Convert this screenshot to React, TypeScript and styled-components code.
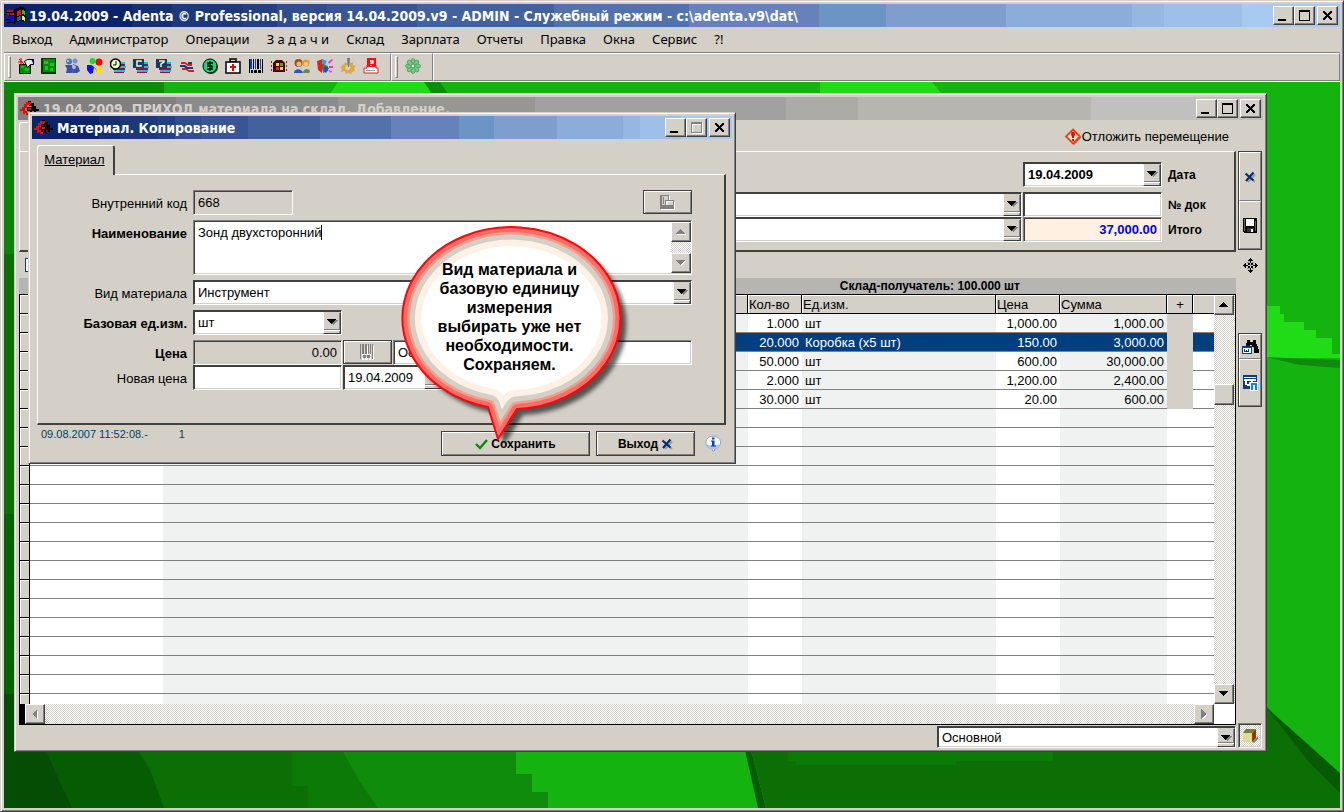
import React from 'react';
import styled, { createGlobalStyle, css } from 'styled-components';

const face = '#d4d0c8';
const dark = '#404040';
const mid = '#808080';
const arial = '"Liberation Sans", Arial, sans-serif';
const tahoma = '"DejaVu Sans Condensed", "DejaVu Sans", Tahoma, sans-serif';
const menuFont = '"Noto Sans", Tahoma, sans-serif';
const dither = 'repeating-conic-gradient(#d4d0c8 0 25%, #ffffff 0 50%) 0 0 / 2px 2px';

const activeCaption = `linear-gradient(90deg, #0a246a 9.6%, #14306f 0 12.6%, #1c397a 0 17.9%, #24417f 0 20.4%,
  #2f4e8b 0 24.2%, #385694 0 30.9%, #41629d 0 41.2%, #5272ab 0 51.3%, #6583ba 0 61%, #6c94c5 0 66%,
  #7e9fcd 0 75%, #8badda 0 84.4%, #95b8e0 0 86.8%, #9cc0e8 0 92.7%, #a6caf0 0)`;
const inactiveCaption = `linear-gradient(90deg, #808080 12.7%, #8a8b8d 0 25.7%, #969692 0 41.5%, #a1a1a1 0 61.7%,
  #abaca8 0 67.5%, #b6b5b0 0 86.2%, #c0c0bf 0)`;

const Global = createGlobalStyle`
  *, *::before, *::after { box-sizing: border-box; }
  html, body, #root { height: 100%; }
  body { margin: 0; overflow: hidden; background: ${face}; color: #000; font: 13px/16px ${arial}; }
  button, input, select, textarea { font: inherit; color: inherit; margin: 0; border-radius: 0; }
  svg { display: block; flex: none; }
`;

const windowFrame = css`
  display: flex;
  flex-direction: column;
  background: ${face};
  border: 1px solid;
  border-color: ${face} ${dark} ${dark} ${face};
  box-shadow: inset 1px 1px #fff, inset -1px -1px ${mid};
  padding: 3px;
`;

const raised = css`
  background: ${face};
  border: 1px solid;
  border-color: #fff ${dark} ${dark} #fff;
  box-shadow: inset -1px -1px ${mid};
`;

const sunken = css`
  border: 1px solid;
  border-color: ${mid} #fff #fff ${mid};
  box-shadow: inset 1px 1px ${dark}, inset -1px -1px ${face};
`;

const AppFrame = styled.div`
  ${windowFrame}
  height: 100vh;
`;

const TitleBar = styled.header<{ $inactive?: boolean }>`
  display: flex;
  align-items: center;
  flex: none;
  height: 23px;
  padding: 0 2px;
  background: ${(p) => (p.$inactive ? inactiveCaption : activeCaption)};
  color: ${(p) => (p.$inactive ? face : '#fff')};
`;

const TitleText = styled.h1`
  flex: 1;
  margin: 0 0 0 3px;
  font: bold 14px/20px ${tahoma};
  white-space: nowrap;
  overflow: hidden;
`;

const CaptionButtons = styled.div`
  display: flex;
  button:last-child { margin-left: 2px; }
`;

const CaptionButton = styled.button`
  ${raised}
  display: flex;
  align-items: center;
  justify-content: center;
  width: 21px;
  height: 19px;
  padding: 0;
`;

const MenuBar = styled.nav`
  display: flex;
  flex: none;
  height: 25px;
`;

const MenuItem = styled.button`
  border: 0;
  background: none;
  padding: 0 9px 2px 8px;
  font: 13px/22px ${menuFont};
  white-space: nowrap;
`;

const ToolBar = styled.div`
  display: flex;
  flex: none;
  height: 30px;
  border-top: 1px solid ${mid};
  border-bottom: 1px solid #fff;
`;

const ToolGroup = styled.div<{ $grow?: boolean }>`
  display: flex;
  align-items: center;
  gap: 3px;
  padding: 0 9px 0 3px;
  border: 1px solid;
  border-color: #fff ${mid} ${mid} #fff;
  flex: ${(p) => (p.$grow ? '1' : 'none')};
`;

const Grip = styled.span`
  width: 3px;
  height: 22px;
  margin-right: 2px;
  border: 1px solid;
  border-color: #fff ${mid} ${mid} #fff;
`;

const ToolButton = styled.button`
  display: flex;
  align-items: center;
  justify-content: center;
  width: 20px;
  height: 24px;
  padding: 0 0 2px;
  border: 0;
  background: none;
`;

const Desktop = styled.main`
  position: relative;
  flex: 1;
  min-height: 0;
  overflow: hidden;
  background: #15b30f;
`;

const Wallpaper = styled.svg`
  width: 100%;
  height: 100%;
`;

const ReceiptWindow = styled.section`
  ${windowFrame}
  position: absolute;
  inset: 11px 73px 56px 10px;
`;

const ReceiptBody = styled.div`
  display: grid;
  grid-template-columns: 1fr 24px;
  gap: 2px;
  flex: 1;
  min-height: 0;
  padding: 0 1px;
`;

const MainColumn = styled.div`
  display: flex;
  flex-direction: column;
  min-height: 0;
`;

const SideColumn = styled.div`
  display: flex;
  flex-direction: column;
  align-items: center;
  padding-top: 31px;
`;

const SideGroup = styled.div`
  display: flex;
  flex-direction: column;
  width: 24px;
  border: 1px solid ${dark};
  background: ${face};
`;

const SideButton = styled.button<{ $h: number }>`
  display: flex;
  align-items: center;
  justify-content: center;
  height: ${(p) => p.$h}px;
  padding: 0;
  background: ${face};
  border: 1px solid;
  border-color: #fff ${mid} ${mid} #fff;
`;

const MoveIcon = styled.div`
  margin: 8px 0 60px;
`;

const BoxButton = styled.button`
  ${sunken}
  display: flex;
  align-items: center;
  justify-content: center;
  width: 24px;
  height: 25px;
  margin-top: auto;
  padding: 0;
  background: ${dither};
`;

const ReceiptTop = styled.div`
  display: flex;
  justify-content: space-between;
  height: 31px;
  padding: 2px 7px 0 0;
`;

const ReceiptTab = styled.button`
  width: 96px;
  border: 1px solid;
  border-color: #fff ${dark} transparent #fff;
  border-radius: 3px 3px 0 0;
  background: ${face};
  padding: 0;
`;

const PostponeButton = styled.button`
  display: flex;
  align-items: center;
  border: 0;
  background: none;
  padding: 0;
`;

const panelBorder = css`
  border: solid;
  border-width: 1px 2px 2px 1px;
  border-color: #fff ${dark} ${dark} #fff;
`;

const ReceiptPanel = styled.div`
  ${panelBorder}
  display: grid;
  grid-template-columns: 1fr 139px 71px;
  grid-template-rows: 25px 5px 25px 25px;
  column-gap: 1px;
  height: 101px;
  padding: 10px 0 0 180px;
`;

const Spacer = styled.span`
  grid-column: 1 / -1;
`;

const ReceiptLabel = styled.label`
  align-self: center;
  padding-left: 5px;
  font-size: 12px;
  font-weight: bold;
`;

const FieldBox = styled.div<{ $w?: number; $tone?: string; $deep?: boolean }>`
  ${sunken}
  ${(p) => p.$deep && css`border-color: ${dark} #fff #fff ${dark};`}
  display: flex;
  height: 25px;
  width: ${(p) => (p.$w ? `${p.$w}px` : 'auto')};
  padding: 1px 0 0 2px;
  background: ${(p) => p.$tone || '#fff'};
`;

const fieldText = css<{ $right?: boolean; $bold?: boolean; $color?: string }>`
  flex: 1;
  min-width: 0;
  width: 100%;
  border: 0;
  padding: 0 4px 0 2px;
  background: transparent;
  outline: 0;
  text-align: ${(p) => (p.$right ? 'right' : 'left')};
  font-weight: ${(p) => (p.$bold ? 'bold' : 'normal')};
  color: ${(p) => p.$color || '#000'};
`;

const FieldInput = styled.input`${fieldText}`;
const FieldSelect = styled.select`
  ${fieldText}
  appearance: none;
`;

const ArrowFace = styled.span`
  display: flex;
  flex-direction: column;
  flex: none;
  width: 18px;
  background: ${face};
  border: 1px solid;
  border-color: ${face} ${dark} ${dark} #fff;
  box-shadow: inset -1px 0 ${mid};
  pointer-events: none;
  svg { margin: 6px auto 0 3px; }
  &::after {
    content: '';
    height: 2px;
    margin-top: auto;
    margin-bottom: 2px;
    border-top: 1px solid ${mid};
    border-bottom: 1px solid #fff;
  }
`;

const CheckStrip = styled.div`
  display: flex;
  align-items: center;
  height: 26px;
  padding-left: 6px;
  input {
    appearance: none;
    width: 13px;
    height: 14px;
    border: 1px solid #0a3f80;
    background: #fff;
  }
`;

const GroupStrip = styled.div`
  height: 16px;
  padding-right: 216px;
  background: #b6b5b1;
  font: bold 12px/16px ${arial};
  text-align: right;
  white-space: nowrap;
`;

const GridBox = styled.div`
  display: grid;
  grid-template-columns: 1fr 21px;
  grid-template-rows: minmax(0, 1fr) 20px;
  flex: 1;
  min-height: 0;
  border: solid #000;
  border-width: 1px 1px 1px 0;
`;

const GridViewport = styled.div`
  overflow: hidden;
  min-width: 0;
`;

const DataTable = styled.table`
  width: 100%;
  table-layout: fixed;
  border-collapse: separate;
  border-spacing: 0;
  background: #fff;
  th, td {
    height: 19px;
    padding: 1px 3px 0 2px;
    line-height: 17px;
    font-weight: normal;
    white-space: nowrap;
    overflow: hidden;
  }
  thead th {
    background: ${face};
    text-align: left;
    padding: 1px 0 0 1px;
    border: solid #000;
    border-width: 0 1px 1px 0;
    box-shadow: inset 1px 1px #fff;
  }
  thead th:first-child { border-left-width: 1px; }
  thead th:last-child { border-right-width: 0; }
  thead th:nth-child(8) { text-align: center; }
  tbody td { border-bottom: 1px solid ${mid}; }
  td:nth-child(even) { text-align: right; }
  td:nth-child(odd) { background: #f0f2f1; }
  td:nth-child(5) { padding-left: 3px; }
  td:nth-child(6), td:nth-child(7) { text-align: right; }
  tbody td:nth-child(9) { background: #fff; }
`;

const RowHead = styled.th`
  background: ${face};
  border: solid #000;
  border-width: 0 1px 1px 1px;
  box-shadow: inset 1px 1px #fff;
`;

const DataRow = styled.tr<{ $selected?: boolean; $filled?: boolean }>`
  ${(p) => p.$filled && css`&& td:nth-child(8) { background: ${face}; border-bottom-color: ${face}; }`}
  ${(p) => p.$selected && css`
    color: #fff;
    && td:not(:nth-child(8)) { background: #003f7f; }
  `}
`;

const ScrollButton = styled.button`
  ${raised}
  display: flex;
  align-items: center;
  justify-content: center;
  flex: none;
  width: 20px;
  height: 20px;
  padding: 0;
`;

const VScroll = styled.div`
  display: flex;
  flex-direction: column;
  background: ${dither};
`;

const Thumb = styled.span`
  ${raised}
  width: 20px;
  height: 21px;
  margin: 69px 0 auto;
`;

const HScroll = styled.div`
  display: flex;
  justify-content: space-between;
  border-left: 6px solid #000;
  background: ${dither};
`;

const Corner = styled.span`
  background: #fff;
`;

const StatusRow = styled.div`
  display: flex;
  justify-content: flex-end;
  flex: none;
  height: 23px;
  padding-top: 1px;
`;

const StatusField = styled(FieldBox)`
  height: 22px;
`;

const Dialog = styled.section`
  ${windowFrame}
  position: absolute;
  left: 24px;
  top: 30px;
  width: 708px;
  height: 352px;
`;

const DialogTab = styled.button`
  align-self: flex-start;
  position: relative;
  z-index: 1;
  height: 30px;
  width: 78px;
  margin: 6px 0 -1px 5px;
  padding: 0 2px 1px 0;
  background: ${face};
  border: solid;
  border-width: 1px 2px 0 1px;
  border-color: #fff ${dark} ${face} #fff;
  border-radius: 3px 3px 0 0;
  text-decoration: underline;
`;

const DialogPanel = styled.form`
  ${panelBorder}
  display: flex;
  flex-direction: column;
  gap: 5px;
  height: 251px;
  margin: 0 6px 0 5px;
  padding: 15px 32px 0 0;
`;

const FormRow = styled.div`
  display: flex;
  gap: 1px;
`;

const PriceRows = styled.div`
  display: flex;
  flex-direction: column;
`;

const FormLabel = styled.label<{ $bold?: boolean }>`
  width: 149px;
  margin-right: 5px;
  padding-top: 6px;
  text-align: right;
  font-weight: ${(p) => (p.$bold ? 'bold' : 'normal')};
`;

const Grow = styled.div`
  flex: 1;
  display: grid;
`;

const IconButton = styled.button<{ $push?: boolean }>`
  display: flex;
  align-items: center;
  justify-content: center;
  width: 49px;
  height: 24px;
  margin-left: ${(p) => (p.$push ? 'auto' : '0')};
  padding: 0;
  background: ${face};
  border: 1px solid ${dark};
  box-shadow: inset 1px 1px #fff, inset -1px -1px ${mid};
`;

const NameBox = styled.div`
  ${sunken}
  flex: 1;
  display: flex;
  height: 55px;
  padding: 1px 0 1px 2px;
  background: #fff;
`;

const NameArea = styled.textarea`
  flex: 1;
  border: 0;
  padding: 3px 2px;
  resize: none;
  outline: 0;
  overflow: hidden;
  background: transparent;
`;

const NameScroll = styled.div`
  display: flex;
  flex-direction: column;
  justify-content: space-between;
  background: ${dither};
`;

const Caret = styled.span`
  position: absolute;
  left: 292px;
  top: 112px;
  width: 1px;
  height: 15px;
  background: #000;
`;

const DialogFooter = styled.footer`
  display: flex;
  align-items: flex-start;
  gap: 6px;
  padding: 3px 10px 0 9px;
  button { margin-top: 3px; }
`;

const Stamp = styled.div`
  display: flex;
  flex: 1;
  gap: 31px;
  font-size: 11px;
  line-height: 13px;
  color: #003f5f;
`;

const DialogButton = styled.button<{ $w: number }>`
  display: flex;
  align-items: center;
  justify-content: center;
  gap: 3px;
  width: ${(p) => p.$w}px;
  height: 25px;
  padding: 0;
  background: ${face};
  border: 1px solid ${dark};
  box-shadow: inset 1px 1px #fff, inset -1px -1px ${mid};
  font-size: 12px;
  font-weight: bold;
`;

const InfoButton = styled.button`
  align-self: center;
  border: 0;
  padding: 0;
  margin-left: 3px;
  background: none;
`;

const Balloon = styled.aside`
  position: absolute;
  left: 393px;
  top: 141px;
  width: 240px;
  height: 230px;
`;

const BalloonText = styled.p`
  position: absolute;
  inset: 37px 30px auto 15px;
  margin: 0;
  text-align: center;
  font: bold 16px/19px ${arial};
  white-space: pre-line;
`;

/* ---------- icons ---------- */

const Min = () => (
  <svg width="15" height="13" shapeRendering="crispEdges"><rect x="2" y="10" width="8" height="2" /></svg>
);
const Max = ({ off }: { off?: boolean }) => (
  <svg width="13" height="13" shapeRendering="crispEdges">
    {off && <path d="M2 2h11v11H2zM3 4v8h9V4z" fillRule="evenodd" fill="#fff" />}
    <path d="M1 1h11v11H1zM2 3v8h9V3z" fillRule="evenodd" fill={off ? mid : '#000'} />
  </svg>
);
const Close = () => (
  <svg width="11" height="11" viewBox="0 0 11 11" shapeRendering="crispEdges">
    <path d="M1 1h2l2.500 3L8 1h2v1L7 5.500 10 9v1H8L5.500 7 3 10H1V9l3-3.500L1 2z" />
  </svg>
);
const Tri = ({ dir, off }: { dir: 'up' | 'down' | 'left' | 'right'; off?: boolean }) => {
  const paths = { up: 'M0 7h9L4.500 2z', down: 'M0 2h9L4.500 7z', left: 'M7 0v10L2 5z', right: 'M2 0v10l5-5z' };
  return (
    <svg width="10" height="10" viewBox="0 0 10 10" shapeRendering="crispEdges">
      {off && <path d={paths[dir]} fill="#fff" transform="translate(1 1)" />}
      <path d={paths[dir]} fill={off ? mid : '#000'} />
    </svg>
  );
};
const ComboArrow = () => (
  <ArrowFace>
    <svg width="11" height="7" viewBox="0 0 11 7" shapeRendering="crispEdges">
      <path d="M2 1h9v1H10v1H9v1H8v1H7v1H6V5H5z" fill={mid} />
      <path d="M0 0h9v1H8v1H7v1H6v1H5v1H4V4H3V3H2V2H1V1H0z" />
    </svg>
  </ArrowFace>
);

const AppLogo = () => (
  <svg width="20" height="18" viewBox="0 0 20 18" shapeRendering="crispEdges">
    <path d="M8 2l3-1 3-1h3l3 2v13l-3-1h-3l-3 1-3 2z" fill="#000" />
    <path d="M11 4l4-1v5l-4 1z" fill="#e01818" /><path d="M16 3l3 1v4l-3-1z" fill="#1c1" />
    <path d="M11 10l4-1v4l-4 1z" fill="#06c" /><path d="M16 9l3 1v4l-3-1z" fill="#fe0" />
    <path d="M1 3h6v2H1zM1 6h2v2H1zM4 6h4v2H4z" fill="#c01010" /><path d="M0 9h3v2H0zM4 9h4v3H4zM1 13h6v2H1z" fill="#0a10c8" />
    <path d="M0 5h7v1H0zM3 8h5v1H3zM0 12h4v1H0zM1 15h7v1H1z" fill="#000" />
  </svg>
);
const GearLogo = () => (
  <svg width="20" height="16" viewBox="0 0 20 16" shapeRendering="crispEdges">
    <path d="M8 0h3v2h3v3h2v3h3v2h-3v2h-2v-2h-2v3h-2v1H8v-2h2v-2h2V5H9V3H7V1z" fill="#000" />
    <path d="M9 1H6v2H4v3H2v2H0v2h3v3h2v-1h1v2h3v-2H7v-2H5V7h2V4h3V3h1V1z" fill="#f00" />
    <path d="M7 6h5v4H7z" fill="#000" /><path d="M8 7h3v2H8z" fill="#f00" />
  </svg>
);
const BlueX = () => (
  <svg width="12" height="12" viewBox="0 0 12 12">
    <path d="M2 3l8 7M10 2.500L3 10" stroke={mid} strokeWidth="2" transform="translate(1 1)" opacity=".6" />
    <path d="M1.500 2.500l8 7M9.500 1.500L2 10" stroke="#082c78" strokeWidth="2.200" />
  </svg>
);
const Check = () => (
  <svg width="13" height="12" viewBox="0 0 13 12"><path d="M1 6l4 4 7-8" fill="none" stroke="#0a8a0a" strokeWidth="2.400" /></svg>
);
const Floppy = () => (
  <svg width="15" height="15" viewBox="0 0 15 15" shapeRendering="crispEdges">
    <path d="M0 0h14v15H1l-1-1z" fill="#000" /><path d="M3 1h8v7H3z" fill="#fff" />
    <path d="M1 1h1v12H1zM12 3h1v10h-1z" fill="#6b6644" /><path d="M4 10h7v4H4z" fill="#333" /><path d="M8 11h2v3H8z" fill="#fff" />
  </svg>
);
const Cross4 = () => (
  <svg width="15" height="15" viewBox="0 0 15 15" shapeRendering="crispEdges">
    <path d="M7 0h1v1h1v1h1v1H5V2h1V1h1zM5 12h5v1H9v1H8v1H7v-1H6v-1H5zM0 7h1V6h1V5h1v5H2V9H1V8H0zM12 5h1v1h1v1h1v1h-1v1h-1v1h-1z" />
    <path d="M7 3h1v2H7zM7 10h1v2H7zM3 7h2v1H3zM10 7h2v1h-2zM5 5h2v2H5zM8 5h2v2H8zM5 8h2v2H5zM8 8h2v2H8z" />
    <path d="M4 4h2v1H4zM9 4h2v1H9zM4 10h2v1H4zM9 10h2v1H9zM7 7h1v1H7z" fill={mid} />
  </svg>
);
const WordBox = ({ find }: { find?: boolean }) => (
  <svg width="17" height="16" viewBox="0 0 17 16" shapeRendering="crispEdges">
    {find && <path d="M5 1h3v2h3V1h3v3l1 2 2 5v3h-5V8h-2V6H8v1H4V4h1z" fill="#000" />}
    {find ? (
      <>
        <path d="M0 7h10v8H0z" fill="#003f7f" /><path d="M1 9h8v5H1z" fill="#fff" />
        <path d="M2 10h1v2h1v-1h1v1h1v-2h1v3H2z" fill="#003f7f" />
      </>
    ) : (
      <>
        <path d="M1 0h14v14H1z" fill="#003f7f" /><path d="M2 2h12v1H2zM2 4h12v2H2z" fill="#fff" />
        <path d="M3 6h2v3h2V7h1v2h1V6h2v5H9v-1H8v1H5v-1H3z" fill="#fff" />
        <path d="M8 7h8v9H8z" fill="#fff" /><path d="M9 8h6v7h-2v-5h-2v5H9z" fill="#0a84ff" />
      </>
    )}
  </svg>
);
const BoxIcon = () => (
  <svg width="17" height="16" viewBox="0 0 17 16">
    <path d="M10 14l6-6v3l-4 4z" fill={mid} /><path d="M1 5l3-4h10l-4 4z" fill="#7d7b3c" />
    <path d="M1 5h9v9H1z" fill="#dedc94" /><path d="M10 5l4-4v9l-4 4z" fill="#8a3b06" />
  </svg>
);
const Warn = () => (
  <svg width="18" height="18" viewBox="0 0 18 18">
    <path d="M10 2l7 8-7 7-7-7z" fill="#777" /><path d="M9 1.500l7 7-7 7-7-7z" fill="#f0dcd0" stroke="#e0480a" strokeWidth="1.800" />
    <ellipse cx="9" cy="6" rx="2" ry="2.500" fill="#f00" /><path d="M8 8h2v2H8z" fill="#f00" /><rect x="8" y="11" width="2" height="2" fill="#f00" />
  </svg>
);
const InfoIcon = () => (
  <svg width="18" height="18" viewBox="0 0 18 18">
    <path d="M9 1a7.500 6.500 0 0 1 2 12.800L9.500 17 7.500 13.800A7.500 6.500 0 0 1 9 1z" fill="#f4f8ff" stroke="#8ba5c9" />
    <path d="M2.500 9a6.500 5 0 0 0 13 0c-3 2-10 2-13 0z" fill="#a8c4ea" />
    <rect x="8" y="2.500" width="2.500" height="2" fill="#1540a8" /><path d="M7 5.500h3.500v5H12v1H7v-1h1v-4H7z" fill="#1540a8" />
  </svg>
);
const Barcode = () => (
  <svg width="15" height="16" viewBox="0 0 15 16" shapeRendering="crispEdges">
    <path d="M1 1h2v10H1zM4 1h1v10H4zM6 1h2v10H6zM9 1h1v10H9zM11 1h2v14h-2zM1 12h2v3H1zM4 12h3v3H4zM8 12h2v3H8z" fill="#fff" transform="translate(1 1)" />
    <path d="M0 0h1v15H0zM2 0h2v10H2zM5 0h2v10H5zM8 0h1v10H8zM10 0h1v10h-1zM12 0h1v15h-1zM3 11h3v3H3zM7 11h3v3H7z" fill={mid} />
  </svg>
);
const CopyGlyph = () => (
  <svg width="17" height="17" viewBox="0 0 17 17" shapeRendering="crispEdges">
    <path d="M2 2h9v6h5v8H2z" fill="#fff" /><path d="M1 1h9v5h5v9H1z" fill={mid} />
    <path d="M3 2h6v4H6v5H3z" fill={face} /><path d="M4 3h1v7H4z" fill={mid} /><path d="M7 7h7v4H7z" fill="#f0f0f0" /><path d="M9 8h5v3H9z" fill={face} />
  </svg>
);

const G = '#008a00';
const listLines = (
  <>
    <path d="M4 4h11v2H4zM5 8h11v2H5zM4 12h11v2H4z" fill="#0cc" />
    <path d="M8 6h7v2H8zM3 10h12v2H3zM4 14h10v1H4z" fill="#a0084a" />
  </>
);
const tools: { name: string; art: React.ReactNode }[] = [
  { name: 'Карточка', art: <><path d="M1.500 6.500h11v9h-11z" fill={G} stroke="#000" /><path d="M3 8h3v2H3zM7 10h4v3H7z" fill="#0c0" /><path d="M6.500 3.500l3-2h6v5h-3l-3 3z" fill="#e8e8e8" stroke="#000" /><path d="M13 1h3v4h-1z" fill="#006" /><path d="M1 1l5 5M3 0v7M0 4h5" stroke="#d00" /></> },
  { name: 'Пациенты', art: <><path d="M0 0h15v16H0z" fill="#0a3a0a" /><path d="M2 1h12v13H2z" fill="#0a8a0a" /><path d="M3 3h4v3H3zM9 5h4v3H9zM4 8h3v4H4zM9 10h3v3H9z" fill="#1fc41f" /></> },
  { name: 'Сотрудники', art: <><circle cx="5" cy="3.500" r="3" fill="#5570b8" /><circle cx="11" cy="3" r="2.500" fill="#7890c8" /><path d="M1 7h7l2 5-2 3H2l1-4z" fill="#3a529c" /><path d="M9 6l5 2 2 5-3 2H8l2-3z" fill="#3a529c" /><circle cx="4" cy="3" r="1" fill="#dde6ff" /><circle cx="10" cy="9" r="2" fill="#a8b8e8" /></> },
  { name: 'Шары', art: <><path d="M4 7l4 3 3 5" stroke="#888" fill="none" /><circle cx="5.500" cy="3" r="3" fill="#1d2" /><circle cx="12" cy="4" r="3.500" fill="#f00" /><path d="M0 7h4l3 2-1 6-3 1-3-4z" fill="#11e" /><path d="M9 9l4-1 2 3-3 5h-2z" fill="#fd0" /></> },
  { name: 'Время', art: <>{listLines}<circle cx="5.500" cy="6" r="5" fill="#ffffc8" stroke="#000" strokeWidth="1.500" /><path d="M6 3v4H3" fill="none" stroke="#000" /></> },
  { name: 'Касса', art: <>{listLines}<path d="M0 1h11v9H0z" fill="#0a3f6a" /><path d="M8 4V3H4v5h4V7" fill="none" stroke="#fff8b0" strokeWidth="1.500" /></> },
  { name: 'Неделя', art: <>{listLines}<path d="M0 1h11v9H0z" fill="#0a3f6a" /><path d="M3 3h5v1L5 6v3" fill="none" stroke="#fff8b0" strokeWidth="1.500" /></> },
  { name: 'Обмен', art: <><path d="M2 4h4l3 2h4v2H9L6 6H2zM3 10h4l3 2h5v2h-5l-3-2H3z" fill="#e01818" /><path d="M9 4h4v2H9zM1 7h5l3 2h5v2H8L5 9H1z" fill="#113a8a" /></> },
  { name: 'Оплата', art: <><circle cx="9" cy="9" r="7" fill="#333" /><circle cx="8" cy="8" r="7" fill="#18d878" stroke="#000" /><path d="M11 5H6v3h4v3H5M8 3v10" fill="none" stroke="#000" strokeWidth="1.300" /></> },
  { name: 'Медкарта', art: <><path d="M5 1h6v3H5z" fill="none" stroke="#000" strokeWidth="1.500" /><path d="M1 4h14v11H1z" fill="#fff" stroke="#000" strokeWidth="1.500" /><path d="M7 6h2v2h2v2H9v3H7v-3H5V8h2z" fill="#e00" /></> },
  { name: 'Штрихкод', art: <g shapeRendering="crispEdges"><path d="M2 1h2v10H2zM7 1h1v10H7zM12 1h1v10h-1z" fill="#0a3fba" /><path d="M1 1h1v14H1zM5 1h1v10H5zM9 1h2v10H9zM14 1h1v14h-1zM3 12h2v3H3zM6 12h3v3H6zM10 12h3v3h-3z" fill="#000" /></g> },
  { name: 'Сигнал', art: <><path d="M2 5l3-3h6l3 3v9H2z" fill="#400" /><path d="M5 5h3v3H5z" fill="#fd0" /><path d="M9 5h3v3H9z" fill="#2b2" /><path d="M5 9h3v3H5z" fill="#e22" /><path d="M9 9h3v3H9z" fill="#fd0" /><path d="M0 4h1M0 8h1M0 12h1M15 4h1M15 8h1M15 12h1" stroke="#e00" strokeWidth="2" /></> },
  { name: 'Клиенты', art: <><circle cx="4.500" cy="5" r="4" fill="#9a5010" /><circle cx="12" cy="5" r="3.500" fill="#e89830" /><circle cx="5" cy="6" r="2.500" fill="#e8b888" /><circle cx="12" cy="6" r="2" fill="#f8d098" /><path d="M0 15c0-5 8-5 9 0z" fill="#2a58b8" /><path d="M9 15c0-5 7-5 7-1l-1 1z" fill="#6a8a4a" /></> },
  { name: 'Отчет', art: <><path d="M0 3l6-2 1 4-2 10-4-3z" fill="#d22" /><path d="M5 1l5 2-2 4-3-1z" fill="#2ad" /><path d="M6 6l5 2v5l-5 2z" fill="#1a1" /><path d="M8 8l4 2-3 5-3-3z" fill="#24e" /><path d="M11 4l4-3 1 1-4 4zM12 8h4v2h-4zM11 12l4 1-1 2z" fill="#e3c" /></> },
  { name: 'Настройка', art: <><path d="M2 6l2 1 1-3 2 1 2-2 2 2 2-1v3l3 1-2 2 1 3-3 1-1 2-3-1-2 1-1-3-4 1 1-3-2-2 2-1z" fill="#e0a840" /><circle cx="8" cy="9.500" r="2.500" fill={face} /><path d="M7 0h3L9 9H8z" fill="#6a7890" /></> },
  { name: 'Справка', art: <><path d="M4 0h9v10H4z" fill="#e11" /><path d="M6 3h4v3H8v1M8 8v1" stroke="#fff" strokeWidth="1.500" fill="none" /><path d="M1 10h3v-3h9v3h2v5H1z" fill="#fff" stroke="#d22" /><path d="M4 0h9v9H4z" fill="#e11" /><path d="M7 3h3v2H8v1M8 7v1" stroke="#fff" strokeWidth="1.300" fill="none" /><path d="M3 12h9v1H3z" fill="#999" /></> },
];

const Clover = () => (
  <svg width="16" height="16" viewBox="0 0 16 16">
    {[0, 45, 90, 135, 180, 225, 270, 315].map((a) => (
      <ellipse key={a} cx="8" cy="3.500" rx="2" ry="3" fill="#7cc98a" stroke="#3f9a55" strokeWidth=".8" transform={`rotate(${a} 8 8)`} />
    ))}
    <circle cx="8" cy="8" r="1.200" fill="#d8f0d8" />
  </svg>
);

/* ---------- data ---------- */

const menu = ['Выход', 'Администратор', 'Операции', 'З а д а ч и', 'Склад', 'Зарплата', 'Отчеты', 'Правка', 'Окна', 'Сервис', '?!'];
const rows = [
  ['1.000', 'шт', '1,000.00', '1,000.00'],
  ['20.000', 'Коробка (x5 шт)', '150.00', '3,000.00'],
  ['50.000', 'шт', '600.00', '30,000.00'],
  ['2.000', 'шт', '1,200.00', '2,400.00'],
  ['30.000', 'шт', '20.00', '600.00'],
];
const blankRows = Array.from({ length: 60 }, (_, i) => i);

/* ---------- parts ---------- */

function WindowButtons({ frozen }: { frozen?: boolean }) {
  return (
    <CaptionButtons>
      <CaptionButton aria-label="Свернуть"><Min /></CaptionButton>
      <CaptionButton aria-label="Развернуть" disabled={frozen}><Max off={frozen} /></CaptionButton>
      <CaptionButton aria-label="Закрыть"><Close /></CaptionButton>
    </CaptionButtons>
  );
}

function Combo({ id, value, w, label, box: Box = FieldBox }: { id?: string; value: string; w?: number; label?: string; box?: typeof FieldBox }) {
  return (
    <Box $w={w} $deep>
      <FieldSelect id={id} aria-label={label} defaultValue={value}><option>{value}</option></FieldSelect>
      <ComboArrow />
    </Box>
  );
}

function Greenery() {
  return (
    <Wallpaper viewBox="4 82 1336 726" preserveAspectRatio="none" aria-hidden="true">
      <path d="M4 82H164V94H4z" fill="#0e8a0c" />
      <path d="M338 82H430V94H330z M820 82H932l10 12H820z" fill="#20dc16" />
      <path d="M424 82h16l8 12h-16z" fill="#0e8a0c" />
      <path d="M4 90h12v164H4z" fill="#0d830a" />
      <path d="M4 254h12v260H4z" fill="#0c6f06" />
      <path d="M4 514h12v180H4z" fill="#066304" />
      <path d="M342 750h174v24h16v18h16v16H340z" fill="#0f8c0b" />
      <path d="M280 750h62l18 32 18 26h-98z" fill="#0c7a07" />
      <path d="M130 750h162v36h16v22H130z" fill="#0c6f06" />
      <path d="M30 750h108l12 20 14 38H30z" fill="#055c03" />
      <path d="M4 694h12v56h30l12 28 14 30H4z" fill="#054d04" />
      <path d="M745 750h6l15 58h-8z" fill="#055c03" />
      <path d="M751 750h516v-43l73 83v18H766z" fill="#0c6f06" />
      <path d="M788 752h265v9H956v4H796v-4h-8z" fill="#0c7a07" />
      <path d="M1266 707l74 66v20l-32-32z" fill="#065a04" />
      <path d="M1266 306h14v8h4v8h20v8h12v8h16v16h8v4h-74z" fill="#20dc16" />
      <path d="M1266 357l20 1 54 2v8l-40-3z" fill="#0e8a0c" />
    </Wallpaper>
  );
}

function ReceiptForm() {
  return (
    <ReceiptWindow>
      <TitleBar $inactive>
        <GearLogo />
        <TitleText as="h2">19.04.2009. ПРИХОД материала на склад. Добавление.</TitleText>
        <WindowButtons />
      </TitleBar>
      <ReceiptBody>
        <MainColumn>
          <ReceiptTop>
            <ReceiptTab aria-label="Приход" />
            <PostponeButton><Warn />Отложить перемещение</PostponeButton>
          </ReceiptTop>
          <ReceiptPanel>
            <span />
            <FieldBox $deep>
              <FieldInput id="date" defaultValue="19.04.2009" $bold />
              <ComboArrow />
            </FieldBox>
            <ReceiptLabel htmlFor="date">Дата</ReceiptLabel>
            <Spacer />
            <Combo value="" label="Поставщик" />
            <FieldBox $deep><FieldInput id="doc" /></FieldBox>
            <ReceiptLabel htmlFor="doc">№ док</ReceiptLabel>
            <Combo value="" label="Склад" />
            <FieldBox $tone="#fff0e2">
              <FieldInput id="total" defaultValue="37,000.00" $right $bold $color="#0000f0" />
            </FieldBox>
            <ReceiptLabel htmlFor="total">Итого</ReceiptLabel>
          </ReceiptPanel>
          <CheckStrip><input type="checkbox" aria-label="Все" /></CheckStrip>
          <GroupStrip>Склад-получатель: 100.000 шт</GroupStrip>
          <GridBox>
            <GridViewport>
              <DataTable>
                <colgroup>
                  <col style={{ width: 11 }} /><col style={{ width: 133 }} /><col /><col style={{ width: 54 }} />
                  <col style={{ width: 194 }} /><col style={{ width: 64 }} /><col style={{ width: 107 }} />
                  <col style={{ width: 26 }} /><col style={{ width: 21 }} />
                </colgroup>
                <thead>
                  <tr><th /><th /><th /><th>Кол-во</th><th>Ед.изм.</th><th>Цена</th><th>Сумма</th><th>+</th><th /></tr>
                </thead>
                <tbody>
                  {rows.map((r, i) => (
                    <DataRow key={r[0]} $filled $selected={i === 1}>
                      <RowHead scope="row" /><td /><td />
                      <td>{r[0]}</td><td>{r[1]}</td><td>{r[2]}</td><td>{r[3]}</td><td /><td />
                    </DataRow>
                  ))}
                  {blankRows.map((i) => (
                    <DataRow key={i}>
                      <RowHead /><td /><td /><td /><td /><td /><td /><td /><td />
                    </DataRow>
                  ))}
                </tbody>
              </DataTable>
            </GridViewport>
            <VScroll>
              <ScrollButton aria-label="Вверх"><Tri dir="up" /></ScrollButton>
              <Thumb />
              <ScrollButton aria-label="Вниз"><Tri dir="down" /></ScrollButton>
            </VScroll>
            <HScroll>
              <ScrollButton aria-label="Влево"><Tri dir="left" off /></ScrollButton>
              <ScrollButton aria-label="Вправо"><Tri dir="right" off /></ScrollButton>
            </HScroll>
            <Corner />
          </GridBox>
          <StatusRow><Combo value="Основной" label="Склад" w={299} box={StatusField} /></StatusRow>
        </MainColumn>
        <SideColumn>
          <SideGroup>
            <SideButton $h={49} aria-label="Отмена"><BlueX /></SideButton>
            <SideButton $h={48} aria-label="Сохранить"><Floppy /></SideButton>
          </SideGroup>
          <MoveIcon><Cross4 /></MoveIcon>
          <SideGroup>
            <SideButton $h={25} aria-label="Найти"><WordBox find /></SideButton>
            <SideButton $h={47} aria-label="Экспорт"><WordBox /></SideButton>
          </SideGroup>
          <BoxButton aria-label="Склад"><BoxIcon /></BoxButton>
        </SideColumn>
      </ReceiptBody>
    </ReceiptWindow>
  );
}

function MaterialDialog() {
  return (
    <Dialog role="dialog" aria-label="Материал. Копирование">
      <TitleBar>
        <GearLogo />
        <TitleText as="h2">Материал. Копирование</TitleText>
        <WindowButtons frozen />
      </TitleBar>
      <DialogTab>Материал</DialogTab>
      <DialogPanel onSubmit={(e) => e.preventDefault()}>
        <FormRow>
          <FormLabel htmlFor="code">Внутренний код</FormLabel>
          <FieldBox $w={100} $tone={face}><FieldInput id="code" defaultValue="668" readOnly /></FieldBox>
          <IconButton $push type="button" aria-label="Копировать"><CopyGlyph /></IconButton>
        </FormRow>
        <FormRow>
          <FormLabel $bold htmlFor="name">Наименование</FormLabel>
          <NameBox>
            <NameArea id="name" defaultValue="Зонд двухсторонний" />
            <NameScroll>
              <ScrollButton type="button" aria-label="Вверх"><Tri dir="up" off /></ScrollButton>
              <ScrollButton type="button" aria-label="Вниз"><Tri dir="down" off /></ScrollButton>
            </NameScroll>
          </NameBox>
        </FormRow>
        <FormRow>
          <FormLabel htmlFor="kind">Вид материала</FormLabel>
          <Grow><Combo id="kind" value="Инструмент" /></Grow>
        </FormRow>
        <FormRow>
          <FormLabel $bold htmlFor="unit">Базовая ед.изм.</FormLabel>
          <Combo id="unit" value="шт" w={149} />
        </FormRow>
        <PriceRows>
          <FormRow>
            <FormLabel $bold htmlFor="price">Цена</FormLabel>
            <FieldBox $w={149} $tone={face}><FieldInput id="price" defaultValue="0.00" $right readOnly /></FieldBox>
            <IconButton type="button" aria-label="Штрихкод"><Barcode /></IconButton>
            <Grow><FieldBox><FieldInput aria-label="Прайс" defaultValue="Основной" /></FieldBox></Grow>
          </FormRow>
          <FormRow>
            <FormLabel htmlFor="newprice">Новая цена</FormLabel>
            <FieldBox $w={149} $deep><FieldInput id="newprice" /></FieldBox>
            <FieldBox $w={100} $deep>
              <FieldInput aria-label="Дата цены" defaultValue="19.04.2009" />
              <ComboArrow />
            </FieldBox>
          </FormRow>
        </PriceRows>
      </DialogPanel>
      <DialogFooter>
        <Stamp><span>09.08.2007 11:52:08.-</span><span>1</span></Stamp>
        <DialogButton $w={149}><Check />Сохранить</DialogButton>
        <DialogButton $w={99}>Выход <BlueX /></DialogButton>
        <InfoButton aria-label="Информация"><InfoIcon /></InfoButton>
      </DialogFooter>
      <Caret />
    </Dialog>
  );
}

const bubble = 'M91,184 A109 91 0 1 1 120,186 L101,216 Z';

function Hint() {
  return (
    <Balloon>
      <svg width="240" height="230" viewBox="0 0 240 230" aria-hidden="true">
        <defs>
          <clipPath id="bubble"><path d={bubble} /></clipPath>
          <filter id="shade"><feGaussianBlur stdDeviation="2" /></filter>
        </defs>
        <path d={bubble} transform="translate(6 6)" fill="#000" opacity=".6" filter="url(#shade)" />
        <path d={bubble} fill="#fff" />
        <g clipPath="url(#bubble)" fill="none" strokeLinejoin="round">
          <path d={bubble} stroke="#fdf0e4" strokeWidth="38" />
          <path d={bubble} stroke={face} strokeWidth="25" />
          <path d={bubble} stroke="#f0a08a" strokeWidth="15" />
          <path d={bubble} stroke="#ff6b68" strokeWidth="10" />
        </g>
        <path d={bubble} fill="none" stroke="#f80808" strokeWidth="2" />
      </svg>
      <BalloonText>{'Вид материала и\nбазовую единицу\nизмерения\nвыбирать уже нет\nнеобходимости.\nСохраняем.'}</BalloonText>
    </Balloon>
  );
}

export default function App() {
  return (
    <AppFrame>
      <Global />
      <TitleBar>
        <AppLogo />
        <TitleText>19.04.2009 - Adenta © Professional, версия 14.04.2009.v9 - ADMIN - Служебный режим - c:\adenta.v9\dat\</TitleText>
        <WindowButtons />
      </TitleBar>
      <MenuBar>{menu.map((m) => <MenuItem key={m}>{m}</MenuItem>)}</MenuBar>
      <ToolBar>
        <ToolGroup>
          <Grip />
          {tools.map((t) => (
            <ToolButton key={t.name} aria-label={t.name}>
              <svg width="16" height="16" viewBox="0 0 16 16">{t.art}</svg>
            </ToolButton>
          ))}
        </ToolGroup>
        <ToolGroup><Grip /><ToolButton aria-label="О программе"><Clover /></ToolButton></ToolGroup>
        <ToolGroup $grow />
      </ToolBar>
      <Desktop>
        <Greenery />
        <ReceiptForm />
        <MaterialDialog />
        <Hint />
      </Desktop>
    </AppFrame>
  );
}
